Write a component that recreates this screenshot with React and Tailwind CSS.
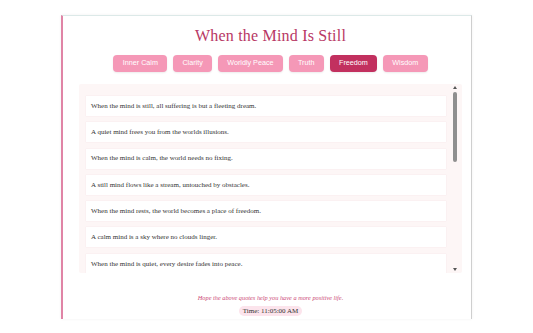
import { useState } from "react";

const categories = [
  "Inner Calm",
  "Clarity",
  "Worldly Peace",
  "Truth",
  "Freedom",
  "Wisdom",
];

const quotes = [
  "When the mind is still, all suffering is but a fleeting dream.",
  "A quiet mind frees you from the worlds illusions.",
  "When the mind is calm, the world needs no fixing.",
  "A still mind flows like a stream, untouched by obstacles.",
  "When the mind rests, the world becomes a place of freedom.",
  "A calm mind is a sky where no clouds linger.",
  "When the mind is quiet, every desire fades into peace.",
];

const serif = { fontFamily: '"Liberation Serif", "Times New Roman", serif' };
const sans = { fontFamily: '"Liberation Sans", Arial, sans-serif' };

const App = () => {
  const [active, setActive] = useState("Freedom");

  return (
    <div className="w-[533px] h-[333px] bg-white overflow-hidden pt-[15px] pl-[61px]">
      <div className="w-[411px] h-[304px] flex flex-col border-l-2 border-l-[#e084a6] border-t border-t-[#dce9e8] border-r border-r-[#cfcfcf] shadow-[0_0_3px_rgba(0,0,0,0.06)]">
        <div className="ml-[16px] w-[383px] flex flex-col items-center">
          <h1
            className="mt-[10px] h-[20px] leading-[20px] text-[16px] tracking-[0.2px] text-[#b83865]"
            style={serif}
          >
            When the Mind Is Still
          </h1>

          <div className="mt-[9px] flex gap-[5.5px]" style={sans}>
            {categories.map((c) => (
              <button
                key={c}
                onClick={() => setActive(c)}
                className={`h-[17px] px-[9.5px] rounded-[4px] text-[7.2px] text-white flex items-center shadow-[0_1px_2px_rgba(0,0,0,0.08)] ${
                  active === c ? "bg-[#c2305f]" : "bg-[#f598b7]"
                }`}
              >
                {c}
              </button>
            ))}
          </div>

          <div className="relative mt-[12px] w-[383px] h-[189px] bg-[#fdf6f6] overflow-hidden rounded-[2px]">
            <div className="pt-[12px] pl-[7px] w-[367px] flex flex-col gap-[6.3px]">
              {quotes.map((q) => (
                <div
                  key={q}
                  className="h-[20px] bg-white flex items-center pl-[5px] text-[7px] text-[#333] shadow-[0_0_1px_rgba(220,180,190,0.4)]"
                  style={serif}
                >
                  {q}
                </div>
              ))}
            </div>

            {/* scrollbar */}
            <div className="absolute right-[2px] top-0 bottom-0 w-[10px] flex flex-col items-center">
              <div className="mt-[2px] w-0 h-0 border-l-[2.5px] border-r-[2.5px] border-b-[3px] border-l-transparent border-r-transparent border-b-[#555]" />
              <div className="mt-[3px] w-[4px] h-[70px] rounded-full bg-[#8f8f8f]" />
              <div className="flex-1" />
              <div className="mb-[2px] w-0 h-0 border-l-[2.5px] border-r-[2.5px] border-t-[3px] border-l-transparent border-r-transparent border-t-[#555]" />
            </div>
          </div>

          <p
            className="mt-[21px] text-[6.3px] italic text-[#cc4a78] leading-[8px]"
            style={serif}
          >
            Hope the above quotes help you have a more positive life.
          </p>

          <div
            className="mt-[4px] h-[10px] px-[4px] rounded-full bg-[#fce4ec] text-[7px] leading-[10px] text-[#333]"
            style={serif}
          >
            Time: 11:05:00 AM
          </div>
        </div>
      </div>
    </div>
  );
};

export default App;
